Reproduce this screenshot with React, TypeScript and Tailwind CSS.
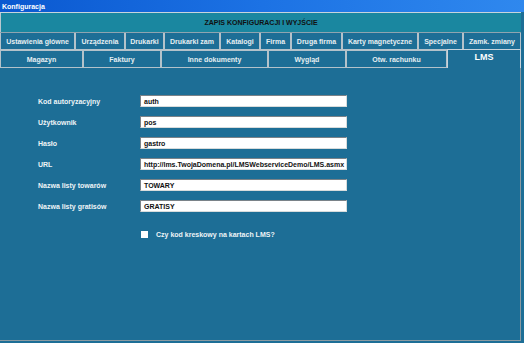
import React from "react";

const row1 = [
  { label: "Ustawienia główne", w: "w-[75px]" },
  { label: "Urządzenia", w: "w-[50px]" },
  { label: "Drukarki", w: "w-[39px]" },
  { label: "Drukarki zam", w: "w-[56px]" },
  { label: "Katalogi", w: "w-[40px]" },
  { label: "Firma", w: "w-[31px]" },
  { label: "Druga firma", w: "w-[51px]" },
  { label: "Karty magnetyczne", w: "w-[76px]" },
  { label: "Specjalne", w: "w-[45px]" },
  { label: "Zamk. zmiany", w: "w-[58px]" },
];

const row2 = [
  { label: "Magazyn", w: "w-[83px]" },
  { label: "Faktury", w: "w-[78px]" },
  { label: "Inne dokumenty", w: "w-[107px]" },
  { label: "Wygląd", w: "w-[78px]" },
  { label: "Otw. rachunku", w: "w-[101px]" },
];

const fields = [
  { label: "Kod autoryzacyjny", value: "auth" },
  { label: "Użytkownik", value: "pos" },
  { label: "Hasło", value: "gastro" },
  { label: "URL", value: "http://lms.TwojaDomena.pl/LMSWebserviceDemo/LMS.asmx" },
  { label: "Nazwa listy towarów", value: "TOWARY" },
  { label: "Nazwa listy gratisów", value: "GRATISY" },
];

export default function App() {
  return (
    <div
      className="w-[524px] h-[343px] overflow-hidden bg-[#226a89] flex flex-col text-[7px] font-bold whitespace-nowrap"
      style={{ fontFamily: "'Liberation Sans', Arial, sans-serif" }}
    >
      {/* title bar */}
      <div className="h-[12px] shrink-0 flex items-center pl-[2px] bg-gradient-to-r from-[#0a58d0] via-[#1c72e4] to-[#2f88ee] text-white text-[7px] leading-none">
        Konfiguracja
      </div>

      <div className="flex-1 flex bg-[#1d6e96]">
        <div className="w-[521px] flex flex-col border-t border-[#c8d4dc]">
          {/* save button */}
          <div className="h-[19px] shrink-0 flex items-center justify-center bg-[#1a87a0] border-l border-[#b8c8d0] text-[#111] leading-none">
            ZAPIS KONFIGURACJI I WYJŚCIE
          </div>

          {/* tab row 1 */}
          <div className="h-[18px] shrink-0 flex border-t border-[#8fa4b0]">
            {row1.map((t) => (
              <div
                key={t.label}
                className={`${t.w} shrink-0 flex items-center justify-center text-[#e6eef2] border-l border-b border-r border-[#b4c2ca] leading-none`}
              >
                {t.label}
              </div>
            ))}
          </div>

          {/* tab row 2 */}
          <div className="h-[18px] shrink-0 flex">
            {row2.map((t) => (
              <div
                key={t.label}
                className={`${t.w} shrink-0 flex items-center justify-center text-[#e6eef2] border border-[#b4c2ca] leading-none`}
              >
                {t.label}
              </div>
            ))}
            <div className="flex-1 -mt-[1px] flex items-start justify-center pt-[3px] text-[9px] text-white border-l border-t border-r border-[#c8d4dc] leading-none">
              LMS
            </div>
          </div>

          {/* content */}
          <div className="flex-1 flex flex-col border-r border-b border-[#8a9aa2] pl-[38px] pt-[27px]">
            <div className="flex flex-col gap-[9px]">
              {fields.map((f) => (
                <div key={f.label} className="flex items-center h-[12px]">
                  <div className="w-[102px] text-[#eef4f6] leading-none">{f.label}</div>
                  <div className="w-[207px] h-[12px] bg-white border-t border-l border-[#7a8288] border-b border-r border-b-[#d8dcdc] border-r-[#d8dcdc] flex items-center pl-[3px] text-[#111] leading-none overflow-hidden">
                    {f.value}
                  </div>
                </div>
              ))}
            </div>
            <div className="flex items-center mt-[19px] ml-[103px]">
              <div className="w-[7px] h-[7px] bg-white" />
              <div className="ml-[8px] text-[#eef4f6] leading-none">Czy kod kreskowy na kartach LMS?</div>
            </div>
          </div>
          <div className="h-[2px] shrink-0" />
        </div>
      </div>
    </div>
  );
}
